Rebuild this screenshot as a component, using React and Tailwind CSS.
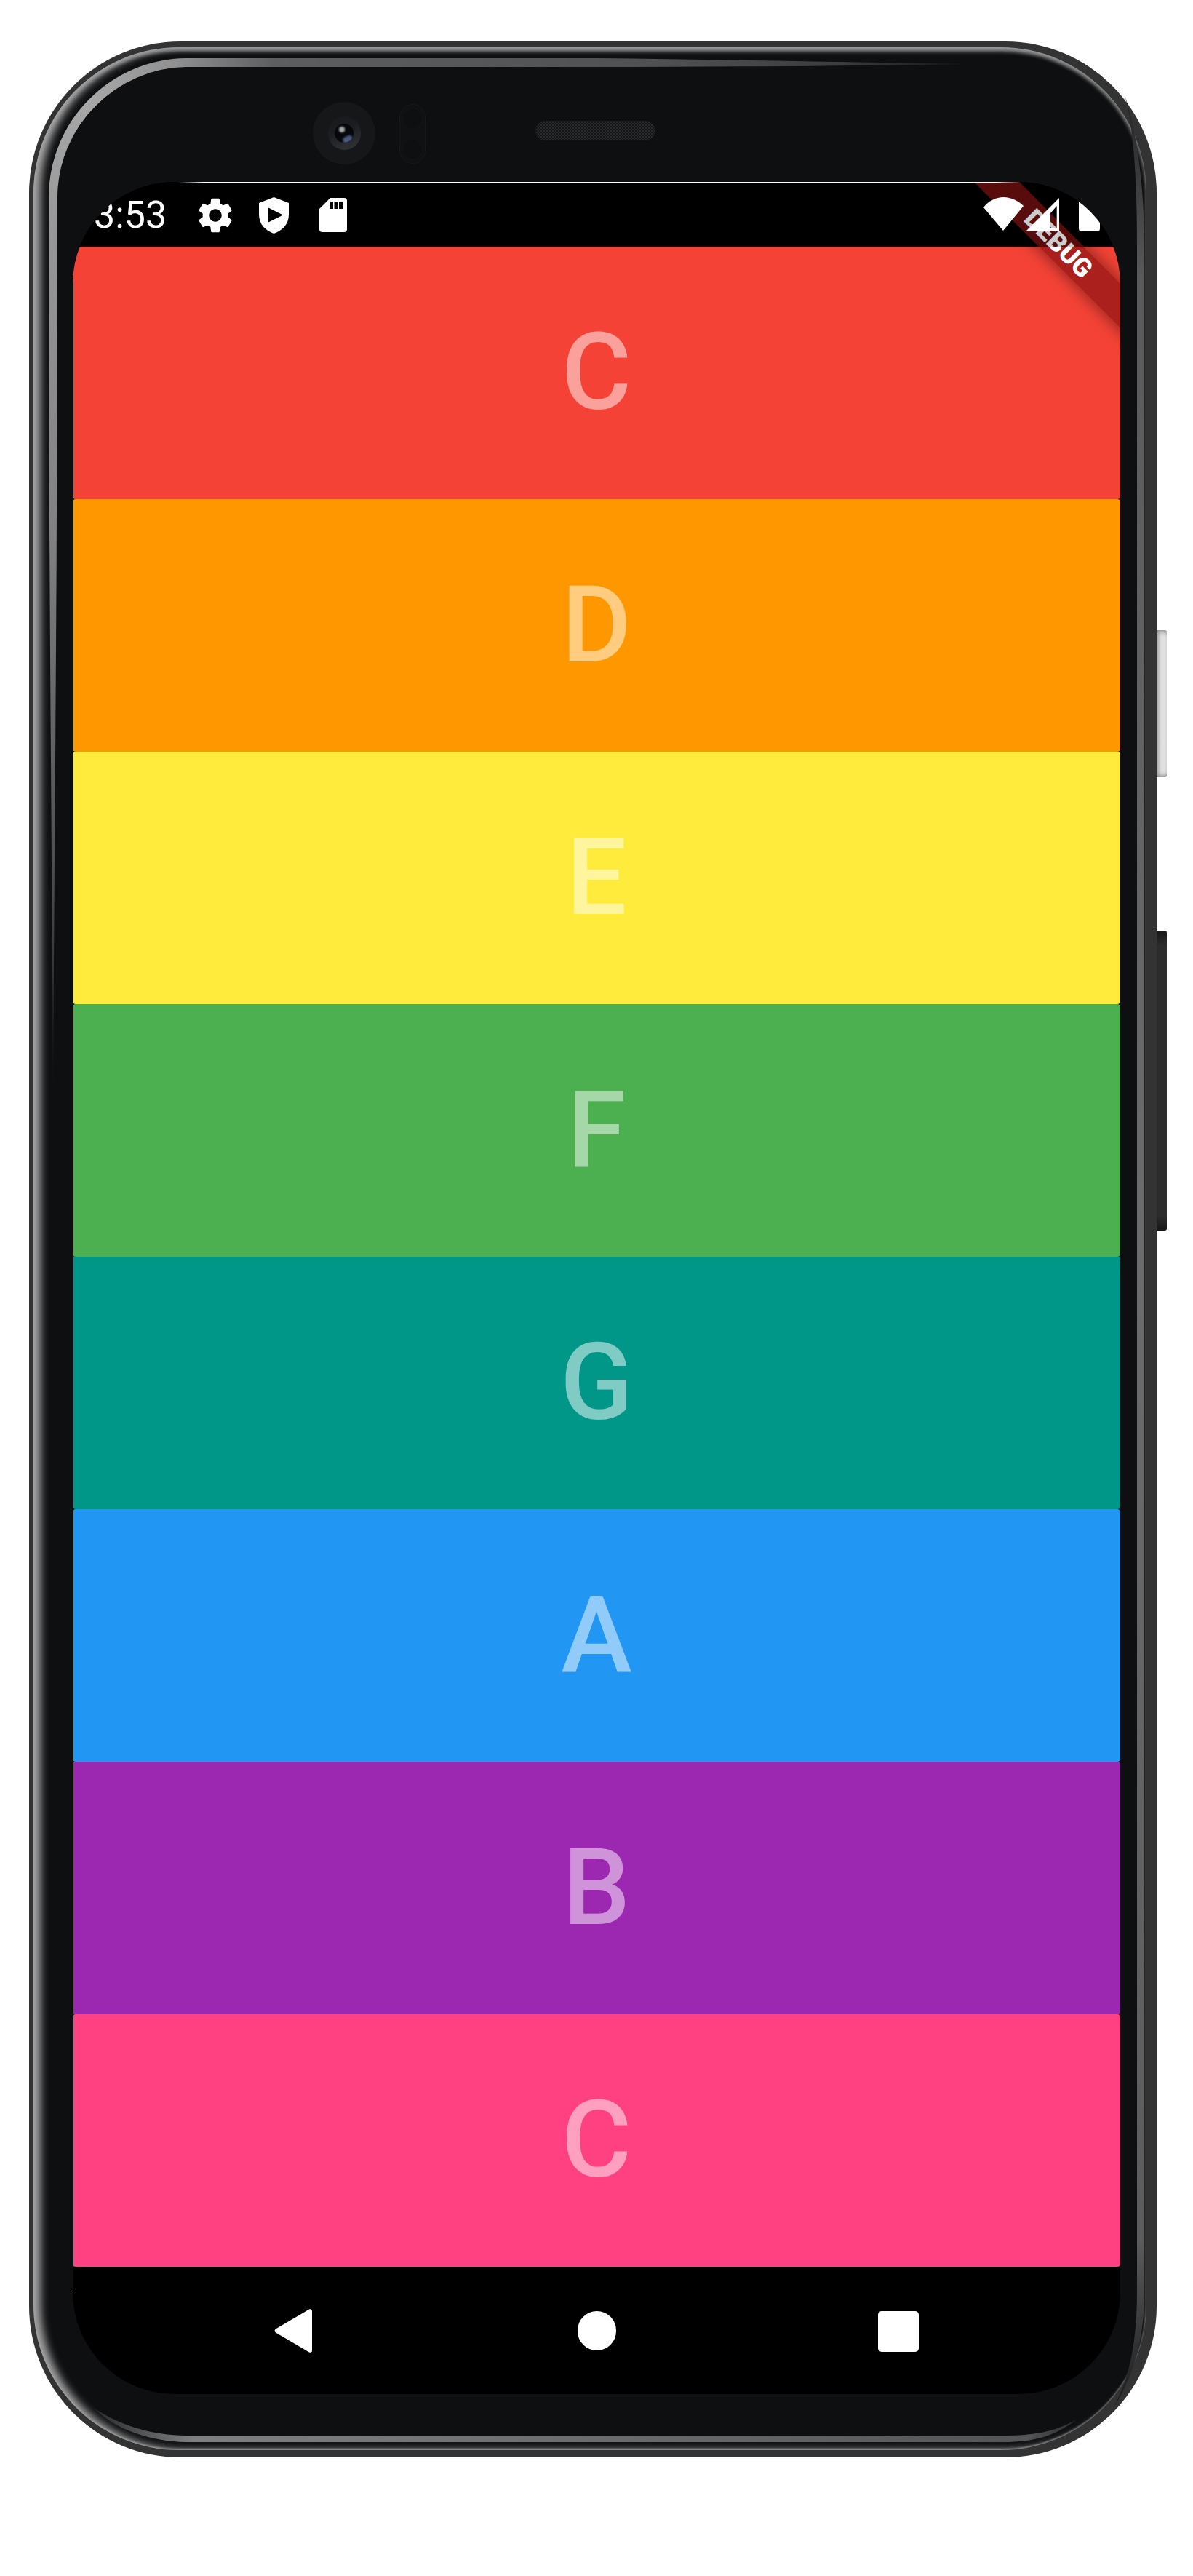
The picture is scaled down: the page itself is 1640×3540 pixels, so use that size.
const rows = [
  { letter: 'C', color: 'bg-[#f44336]' },
  { letter: 'D', color: 'bg-[#ff9800]' },
  { letter: 'E', color: 'bg-[#ffeb3b]' },
  { letter: 'F', color: 'bg-[#4caf50]' },
  { letter: 'G', color: 'bg-[#009688]' },
  { letter: 'A', color: 'bg-[#2196f3]' },
  { letter: 'B', color: 'bg-[#9c27b0]' },
  { letter: 'C', color: 'bg-[#ff4081]' },
]

// Reflections on the bezel, drawn in page coordinates
function BezelHighlights() {
  return (
    <svg
      className="absolute inset-0 pointer-events-none"
      width="1550"
      height="3320"
      viewBox="40 57 1550 3320"
    >
      <defs>
        <linearGradient id="leftBand" gradientUnits="userSpaceOnUse" x1="0" y1="130" x2="0" y2="1505">
          <stop offset="0" stopColor="#a8a8a8" />
          <stop offset="0.15" stopColor="#969696" />
          <stop offset="0.45" stopColor="#808080" />
          <stop offset="0.8" stopColor="#4a4a4a" />
          <stop offset="1" stopColor="#111214" />
        </linearGradient>
        <linearGradient id="topBand" gradientUnits="userSpaceOnUse" x1="120" y1="0" x2="1343" y2="0">
          <stop offset="0" stopColor="#a8a8a8" />
          <stop offset="0.1" stopColor="#909090" />
          <stop offset="0.21" stopColor="#5e5e5e" />
          <stop offset="0.65" stopColor="#505050" />
          <stop offset="0.85" stopColor="#3c3c3c" />
          <stop offset="1" stopColor="#111214" />
        </linearGradient>
        <linearGradient id="rightBand" gradientUnits="userSpaceOnUse" x1="0" y1="130" x2="0" y2="3300">
          <stop offset="0" stopColor="#222325" />
          <stop offset="0.08" stopColor="#5a5a5a" />
          <stop offset="0.5" stopColor="#6c6c6c" />
          <stop offset="0.93" stopColor="#5c5c5c" />
          <stop offset="1" stopColor="#1c1d1f" />
        </linearGradient>
        <linearGradient id="bottomBand" gradientUnits="userSpaceOnUse" x1="130" y1="0" x2="1480" y2="0">
          <stop offset="0" stopColor="#2a2a2c" />
          <stop offset="0.1" stopColor="#808080" />
          <stop offset="0.5" stopColor="#6c6c6c" />
          <stop offset="0.95" stopColor="#555555" />
          <stop offset="1" stopColor="#2a2a2c" />
        </linearGradient>
      </defs>
      <path
        fill="url(#leftBand)"
        d="M73 1505 C71 1100 67 800 67 270 A190 190 0 0 1 123 136 L132 145 A178 178 0 0 0 79 270 C79 800 75 1100 73 1505 Z"
      />
      <path
        fill="url(#topBand)"
        d="M122 137 A190 190 0 0 1 257 80 L820 80 C1000 82 1200 86 1343 88 C1200 90 1000 92 820 92 L257 92 A178 178 0 0 0 131 146 Z"
      />
      <path
        fill="url(#rightBand)"
        d="M1546 130 C1560 180 1563 260 1563 340 L1563 3150 C1563 3220 1552 3270 1530 3310 C1556 3270 1573 3220 1573 3150 L1573 340 C1573 250 1562 180 1546 130 Z"
      />
      <path
        fill="url(#bottomBand)"
        d="M130 3310 C170 3335 210 3347 260 3347 L1380 3347 C1420 3347 1450 3342 1480 3325 C1450 3348 1420 3356 1380 3356 L260 3356 C210 3356 160 3340 130 3310 Z"
      />
    </svg>
  )
}

function CameraCluster() {
  return (
    <div className="flex items-start h-[185px] pl-[330px]">
      <div className="mt-[75px] w-[86px] h-[86px] rounded-full bg-[#161718] flex items-center justify-center">
        <div className="w-[45px] h-[46px] rounded-full bg-[linear-gradient(160deg,#18191b,#1c1d20_40%,#35363a)] flex items-center justify-center">
          <div className="relative w-[26px] h-[26px] rounded-full bg-[#07080b] overflow-hidden">
            <div className="absolute left-[6px] top-[4px] w-[8px] h-[8px] rounded-full bg-[#a8a8a8] blur-[1px]" />
            <div className="absolute left-[11px] top-[17px] w-[14px] h-[9px] rounded-full bg-[#46587f] blur-[1px] -rotate-[25deg]" />
          </div>
        </div>
      </div>
      <div className="mt-[78px] ml-[33px] w-[36px] h-[82px] rounded-full bg-[#101113] border border-[#17181a] flex flex-col items-center justify-between py-[4px]">
        <div className="w-[28px] h-[30px] rounded-full bg-[#0e0f11] border border-[#141517]" />
        <div className="w-[28px] h-[30px] rounded-full bg-[#0e0f11] border border-[#141517]" />
      </div>
      <div className="mt-[101px] ml-[151px] w-[165px] h-[27px] rounded-full border border-[#1c1d1f] bg-[repeating-conic-gradient(#2a2b2c_0_25%,#131416_0_50%)] bg-[length:4px_4px]" />
    </div>
  )
}

function StatusBar() {
  return (
    <div className="h-[89px] flex items-start pl-[29px] pr-[28px] bg-black text-white">
      <span className="relative z-30 mt-[20px] text-[52px] leading-[52px] font-['Roboto',sans-serif]">3:53</span>
      <svg className="relative z-30 ml-[38px] mt-[17px]" width="58" height="58" viewBox="0 0 24 24" fill="#fff">
        <path
          fillRule="evenodd"
          d="M19.14 12.94c.04-.3.06-.61.06-.94 0-.32-.02-.64-.07-.94l2.03-1.58c.18-.14.23-.41.12-.61l-1.92-3.32c-.12-.22-.37-.29-.59-.22l-2.39.96c-.5-.38-1.03-.7-1.62-.94l-.36-2.54c-.04-.24-.24-.41-.48-.41h-3.84c-.24 0-.43.17-.47.41l-.36 2.54c-.59.24-1.13.57-1.62.94l-2.39-.96c-.22-.08-.47 0-.59.22L2.74 8.87c-.12.21-.08.47.12.61l2.03 1.58c-.05.3-.09.63-.09.94s.02.64.07.94l-2.03 1.58c-.18.14-.23.41-.12.61l1.92 3.32c.12.22.37.29.59.22l2.39-.96c.5.38 1.03.7 1.62.94l.36 2.54c.05.24.24.41.48.41h3.84c.24 0 .44-.17.47-.41l.36-2.54c.59-.24 1.13-.56 1.62-.94l2.39.96c.22.08.47 0 .59-.22l1.92-3.32c.12-.22.07-.47-.12-.61l-2.01-1.58zM12 15.6c-1.98 0-3.6-1.62-3.6-3.6s1.62-3.6 3.6-3.6 3.6 1.62 3.6 3.6-1.62 3.6-3.6 3.6z"
        />
      </svg>
      <svg className="relative z-30 ml-[31px] mt-[21px]" width="41" height="50" viewBox="0 0 41 50" fill="#fff">
        <path
          fillRule="evenodd"
          d="M20.5 0 L41 8 V24 C41 37 32 46 20.5 50 C9 46 0 37 0 24 V8 Z M14 15 C13 14.6 12.5 15.2 12.5 16 V33 C12.5 34 13.2 34.5 14 34 L31 25.5 C32 25 32 24 31 23.5 Z"
        />
      </svg>
      <svg className="relative z-30 ml-[42px] mt-[22px]" width="38" height="47" viewBox="0 0 38 47" fill="#fff">
        <path
          fillRule="evenodd"
          d="M15 0 H34 A4 4 0 0 1 38 4 V43 A4 4 0 0 1 34 47 H4 A4 4 0 0 1 0 43 V15 Z M14 5 V15 H19 V5 Z M20.5 5 V15 H25.5 V5 Z M27 5 V15 H32 V5 Z"
        />
      </svg>
      <svg className="relative z-30 ml-auto mt-[21px]" width="55" height="46" viewBox="0 0 55 46" fill="#fff">
        <path d="M27 46 L0 14 C7 5 17 0 27.5 0 C38 0 48 5 55 12 Z" />
      </svg>
      <svg className="relative z-30 ml-[4px] mt-[22px]" width="45" height="45" viewBox="0 0 45 45" fill="#fff">
        <path fillRule="evenodd" d="M45 0 V45 H0 Z M33 21 V42 H41.7 V11 Z" />
      </svg>
      <div className="relative z-30 ml-[27px] mt-[20px] w-[29px] h-[48px] bg-white rounded-b-[4px]" />
    </div>
  )
}

function DebugBanner() {
  return (
    <>
      <div className="absolute z-10 left-[1055px] top-[63px] w-[600px] h-[44px] rotate-45 bg-[rgba(146,20,20,0.755)] shadow-[0_0_22px_rgba(0,0,0,0.5)] flex items-center justify-center">
        <span className="text-white text-[36px] leading-none font-black font-['Roboto',sans-serif]">DEBUG</span>
      </div>
      {/* the system bar dims what passes under it */}
      <div className="absolute z-20 left-0 right-0 top-0 h-[89px] bg-black/20" />
    </>
  )
}

function NavBar() {
  return (
    <div className="h-[175px] flex items-start pl-[277px] pt-[58px]">
      <svg width="52" height="60" viewBox="0 0 52 60" fill="#fff">
        <path d="M48 0.6 C50 -0.4 52 0.8 52 3 V57 C52 59.2 50 60.4 48 59.4 L2 32.5 C0 31 0 29 2 27.5 Z" />
      </svg>
      <div className="ml-[365px] mt-[3px] w-[53px] h-[54px] rounded-full bg-white" />
      <div className="ml-[360px] mt-[3px] w-[56px] h-[56px] rounded-[5px] bg-white" />
    </div>
  )
}

export default function App() {
  return (
    <div className="min-h-[3540px] bg-white flex items-start pl-[40px] pt-[57px]">
      <div className="relative w-[1550px] h-[3320px] rounded-[208px] bg-[#333333] pl-[6px] pr-[14px] pt-[8px] pb-[10px]">
        <div className="h-full rounded-[200px] bg-[#0e0f11] shadow-[inset_10px_0_12px_#a4a4a4,inset_0_5px_5px_#8e8e8e,inset_0_-2px_2px_#6a6a6a] pl-[54px] pr-[36px]">
          <CameraCluster />
          <div className="relative w-[1440px] h-[3040px] rounded-[140px] overflow-hidden bg-black">
            <StatusBar />
            <DebugBanner />
            <div className="flex flex-col">
              {rows.map((row, i) => (
                <div
                  key={i}
                  className={`h-[347px] rounded-[4px] flex items-center justify-center ${row.color}`}
                >
                  <span className="text-white/50 text-[147px] leading-none font-medium font-['Roboto',sans-serif]">
                    {row.letter}
                  </span>
                </div>
              ))}
            </div>
            <NavBar />
            <div className="absolute z-40 top-0 left-[145px] right-[137px] h-px bg-[linear-gradient(90deg,transparent,#fff_3%,#fff_97%,transparent)]" />
            <div className="absolute z-40 left-0 top-[130px] bottom-[140px] w-px bg-white" />
          </div>
        </div>
        <BezelHighlights />
      </div>
      <div className="flex flex-col pt-[809px]">
        <div className="w-[14px] h-[202px] rounded-r-[3px] bg-[linear-gradient(90deg,#a8a8a8,#dedede_45%,#e4e4e4)] shadow-[inset_0_6px_6px_-4px_#8a8a8a,inset_0_-6px_6px_-4px_#8a8a8a]" />
        <div className="mt-[211px] w-[14px] h-[412px] rounded-r-[3px] bg-[linear-gradient(180deg,#161616,#2c2c2c_5%,#2c2c2c_95%,#161616)]" />
      </div>
    </div>
  )
}
